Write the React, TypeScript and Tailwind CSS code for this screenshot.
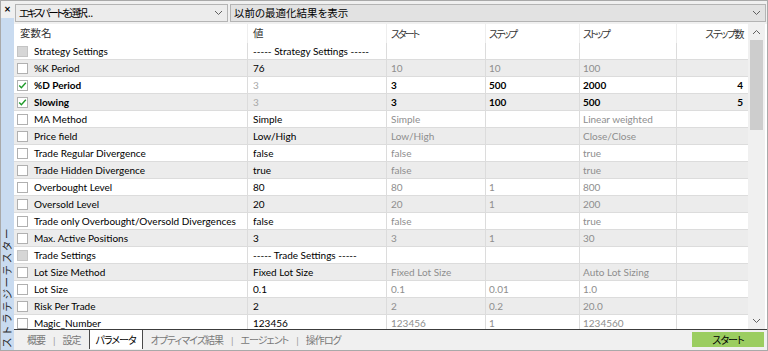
import React from "react";

type Row = {
  name: string;
  value: string;
  start?: string;
  step?: string;
  stop?: string;
  steps?: string;
  kind?: "group" | "opt";
};

const ROWS: Row[] = [
  { name: "Strategy Settings", value: "----- Strategy Settings -----", kind: "group" },
  { name: "%K Period", value: "76", start: "10", step: "10", stop: "100" },
  { name: "%D Period", value: "3", start: "3", step: "500", stop: "2000", steps: "4", kind: "opt" },
  { name: "Slowing", value: "3", start: "3", step: "100", stop: "500", steps: "5", kind: "opt" },
  { name: "MA Method", value: "Simple", start: "Simple", stop: "Linear weighted" },
  { name: "Price field", value: "Low/High", start: "Low/High", stop: "Close/Close" },
  { name: "Trade Regular Divergence", value: "false", start: "false", stop: "true" },
  { name: "Trade Hidden Divergence", value: "true", start: "false", stop: "true" },
  { name: "Overbought Level", value: "80", start: "80", step: "1", stop: "800" },
  { name: "Oversold Level", value: "20", start: "20", step: "1", stop: "200" },
  { name: "Trade only Overbought/Oversold Divergences", value: "false", start: "false", stop: "true" },
  { name: "Max. Active Positions", value: "3", start: "3", step: "1", stop: "30" },
  { name: "Trade Settings", value: "----- Trade Settings -----", kind: "group" },
  { name: "Lot Size Method", value: "Fixed Lot Size", start: "Fixed Lot Size", stop: "Auto Lot Sizing" },
  { name: "Lot Size", value: "0.1", start: "0.1", step: "0.01", stop: "1.0" },
  { name: "Risk Per Trade", value: "2", start: "2", step: "0.2", stop: "20.0" },
  { name: "Magic_Number", value: "123456", start: "123456", step: "1", stop: "1234560" },
];

const COLS = "grid grid-cols-[234px_139px_99px_94px_97px_71px]";

function Chevron({ up = false }: { up?: boolean }) {
  return (
    <svg width="9" height="6" viewBox="0 0 9 6" className="shrink-0">
      <polyline
        points={up ? "1,5 4.5,1.5 8,5" : "1,1 4.5,4.5 8,1"}
        fill="none"
        stroke="#606060"
        strokeWidth="1"
      />
    </svg>
  );
}

function CheckBox({ kind }: { kind?: Row["kind"] }) {
  if (kind === "group") {
    return <div className="w-[11px] h-[11px] shrink-0 border border-[#c4c4c4] bg-[#d6d6d6]" />;
  }
  return (
    <div className="w-[11px] h-[11px] shrink-0 border border-[#b0b0b0] bg-white flex items-center justify-center">
      {kind === "opt" && (
        <svg width="9" height="9" viewBox="0 0 9 9">
          <polyline points="1.2,4.6 3.4,6.8 7.8,1.8" fill="none" stroke="#1f9a2a" strokeWidth="1.4" />
        </svg>
      )}
    </div>
  );
}

function TableRow({ row, index }: { row: Row; index: number }) {
  const bg = index % 2 === 0 ? "bg-white" : "bg-[#ececec]";
  const opt = row.kind === "opt";
  const side = opt ? "text-black font-bold" : "text-[#8e8e8e]";
  return (
    <div className={`${COLS} h-[17px] shrink-0 ${bg} border-b border-[#dcdcdc] leading-[14px]`}>
      <div className="flex items-center pl-[3px] gap-[6px] border-r border-[#dcdcdc]">
        <CheckBox kind={row.kind} />
        <span className={`whitespace-nowrap ${opt ? "font-bold" : ""}`}>{row.name}</span>
      </div>
      <div className={`flex items-center pl-[5px] border-r border-[#dcdcdc] ${opt ? "text-[#a8a8a8]" : ""}`}>
        {row.value}
      </div>
      <div className={`flex items-center pl-[4px] border-r border-[#dcdcdc] ${side}`}>{row.start}</div>
      <div className={`flex items-center pl-[3px] border-r border-[#dcdcdc] ${side}`}>{row.step}</div>
      <div className={`flex items-center pl-[3px] border-r border-[#dcdcdc] ${side}`}>{row.stop}</div>
      <div className="flex items-center justify-end pr-[5px] font-bold">{row.steps}</div>
    </div>
  );
}

const TABS = ["概要", "設定", "パラメータ", "オプティマイズ結果", "エージェント", "操作ログ"];

export default function App() {
  return (
    <div className="w-[768px] h-[351px] flex border border-[#a9a9a9] bg-[#f0f0f0] text-[10px] leading-none text-black font-['Lato','Noto_Sans_CJK_JP',sans-serif] [font-feature-settings:'palt'] overflow-hidden">
      {/* side strip */}
      <div className="w-[13px] flex flex-col shrink-0">
        <div className="h-[17px] flex items-start justify-center pt-[2px] text-[11px] font-bold bg-[#f0f0f0]">×</div>
        <div className="flex-1 bg-[#c9dbf0] flex items-end justify-center pb-[2px]">
          <span className="[writing-mode:vertical-rl] [text-orientation:sideways] rotate-180 text-[10.5px] [font-feature-settings:'palt'_0] tracking-[1.6px] text-[#2b2b2b] whitespace-nowrap">
            ストラテジーテスター
          </span>
        </div>
      </div>

      {/* main */}
      <div className="flex-1 flex flex-col min-w-0">
        <div className="h-[23px] flex gap-[2px] pt-[3px] pl-[1px] pr-[1px] shrink-0 text-[10.5px]">
          <div className="w-[213px] h-[18px] border border-[#b4b4b4] bg-[#ececec] flex items-center justify-between pl-[3px] pr-[4px]">
            <span>
              <span className="tracking-[-2.4px]">エキスパートを選択</span>...
            </span>
            <Chevron />
          </div>
          <div className="flex-1 h-[18px] border border-[#b4b4b4] bg-[#e2e2e2] flex items-center justify-between pl-[3px] pr-[4px]">
            <span>以前の最適化結果を表示</span>
            <Chevron />
          </div>
        </div>

        <div className="h-[306px] flex bg-white border-b border-[#3c3c3c] shrink-0 overflow-hidden">
          <div className="w-[734px] shrink-0 flex flex-col overflow-hidden">
            <div className={`${COLS} h-[19px] shrink-0 bg-white text-[#333] text-[10px]`}>
              <div className="flex items-center pl-[6px] border-r border-[#eeeeee] text-[10.5px]">変数名</div>
              <div className="flex items-center pl-[5px] border-r border-[#eeeeee] text-[10.5px]">値</div>
              <div className="flex items-center pl-[4px] border-r border-[#eeeeee] tracking-[-2px]">スタート</div>
              <div className="flex items-center pl-[3px] border-r border-[#eeeeee] tracking-[-2px]">ステップ</div>
              <div className="flex items-center pl-[3px] border-r border-[#eeeeee] tracking-[-2px]">ストップ</div>
              <div className="flex items-center justify-end pr-[5px] tracking-[-1.5px]">ステップ数</div>
            </div>
            {ROWS.map((row, i) => (
              <TableRow key={row.name} row={row} index={i} />
            ))}
          </div>
          <div className="w-[17px] shrink-0 bg-[#f0f0f0] flex flex-col items-center">
            <div className="h-[16px] flex items-center justify-center">
              <Chevron up />
            </div>
            <div className="w-[13px] h-[90px] bg-[#cdcdcd]" />
            <div className="flex-1" />
            <div className="h-[16px] flex items-center justify-center">
              <Chevron />
            </div>
          </div>
        </div>

        <div className="flex-1 flex items-start justify-between pr-[3px]">
          <div className="flex items-start h-[19px] pl-[5px] text-[10px] tracking-[-1px]">
            {TABS.map((t, i) =>
              t === "パラメータ" ? (
                <div
                  key={t}
                  className="h-[19px] px-[6px] bg-white border-x border-[#4a4a4a] flex items-center text-black"
                >
                  {t}
                </div>
              ) : (
                <div key={t} className="flex items-center h-[19px] text-[#787878]">
                  <span className="px-[8px]">{t}</span>
                  {i !== 1 && i !== 5 && <span className="text-[#9a9a9a]">|</span>}
                </div>
              )
            )}
          </div>
          <div className="mt-[2px] w-[72px] h-[15px] bg-[#9bcd60] flex items-center justify-center text-black text-[10px] tracking-[-1px]">
            スタート
          </div>
        </div>
      </div>
    </div>
  );
}
